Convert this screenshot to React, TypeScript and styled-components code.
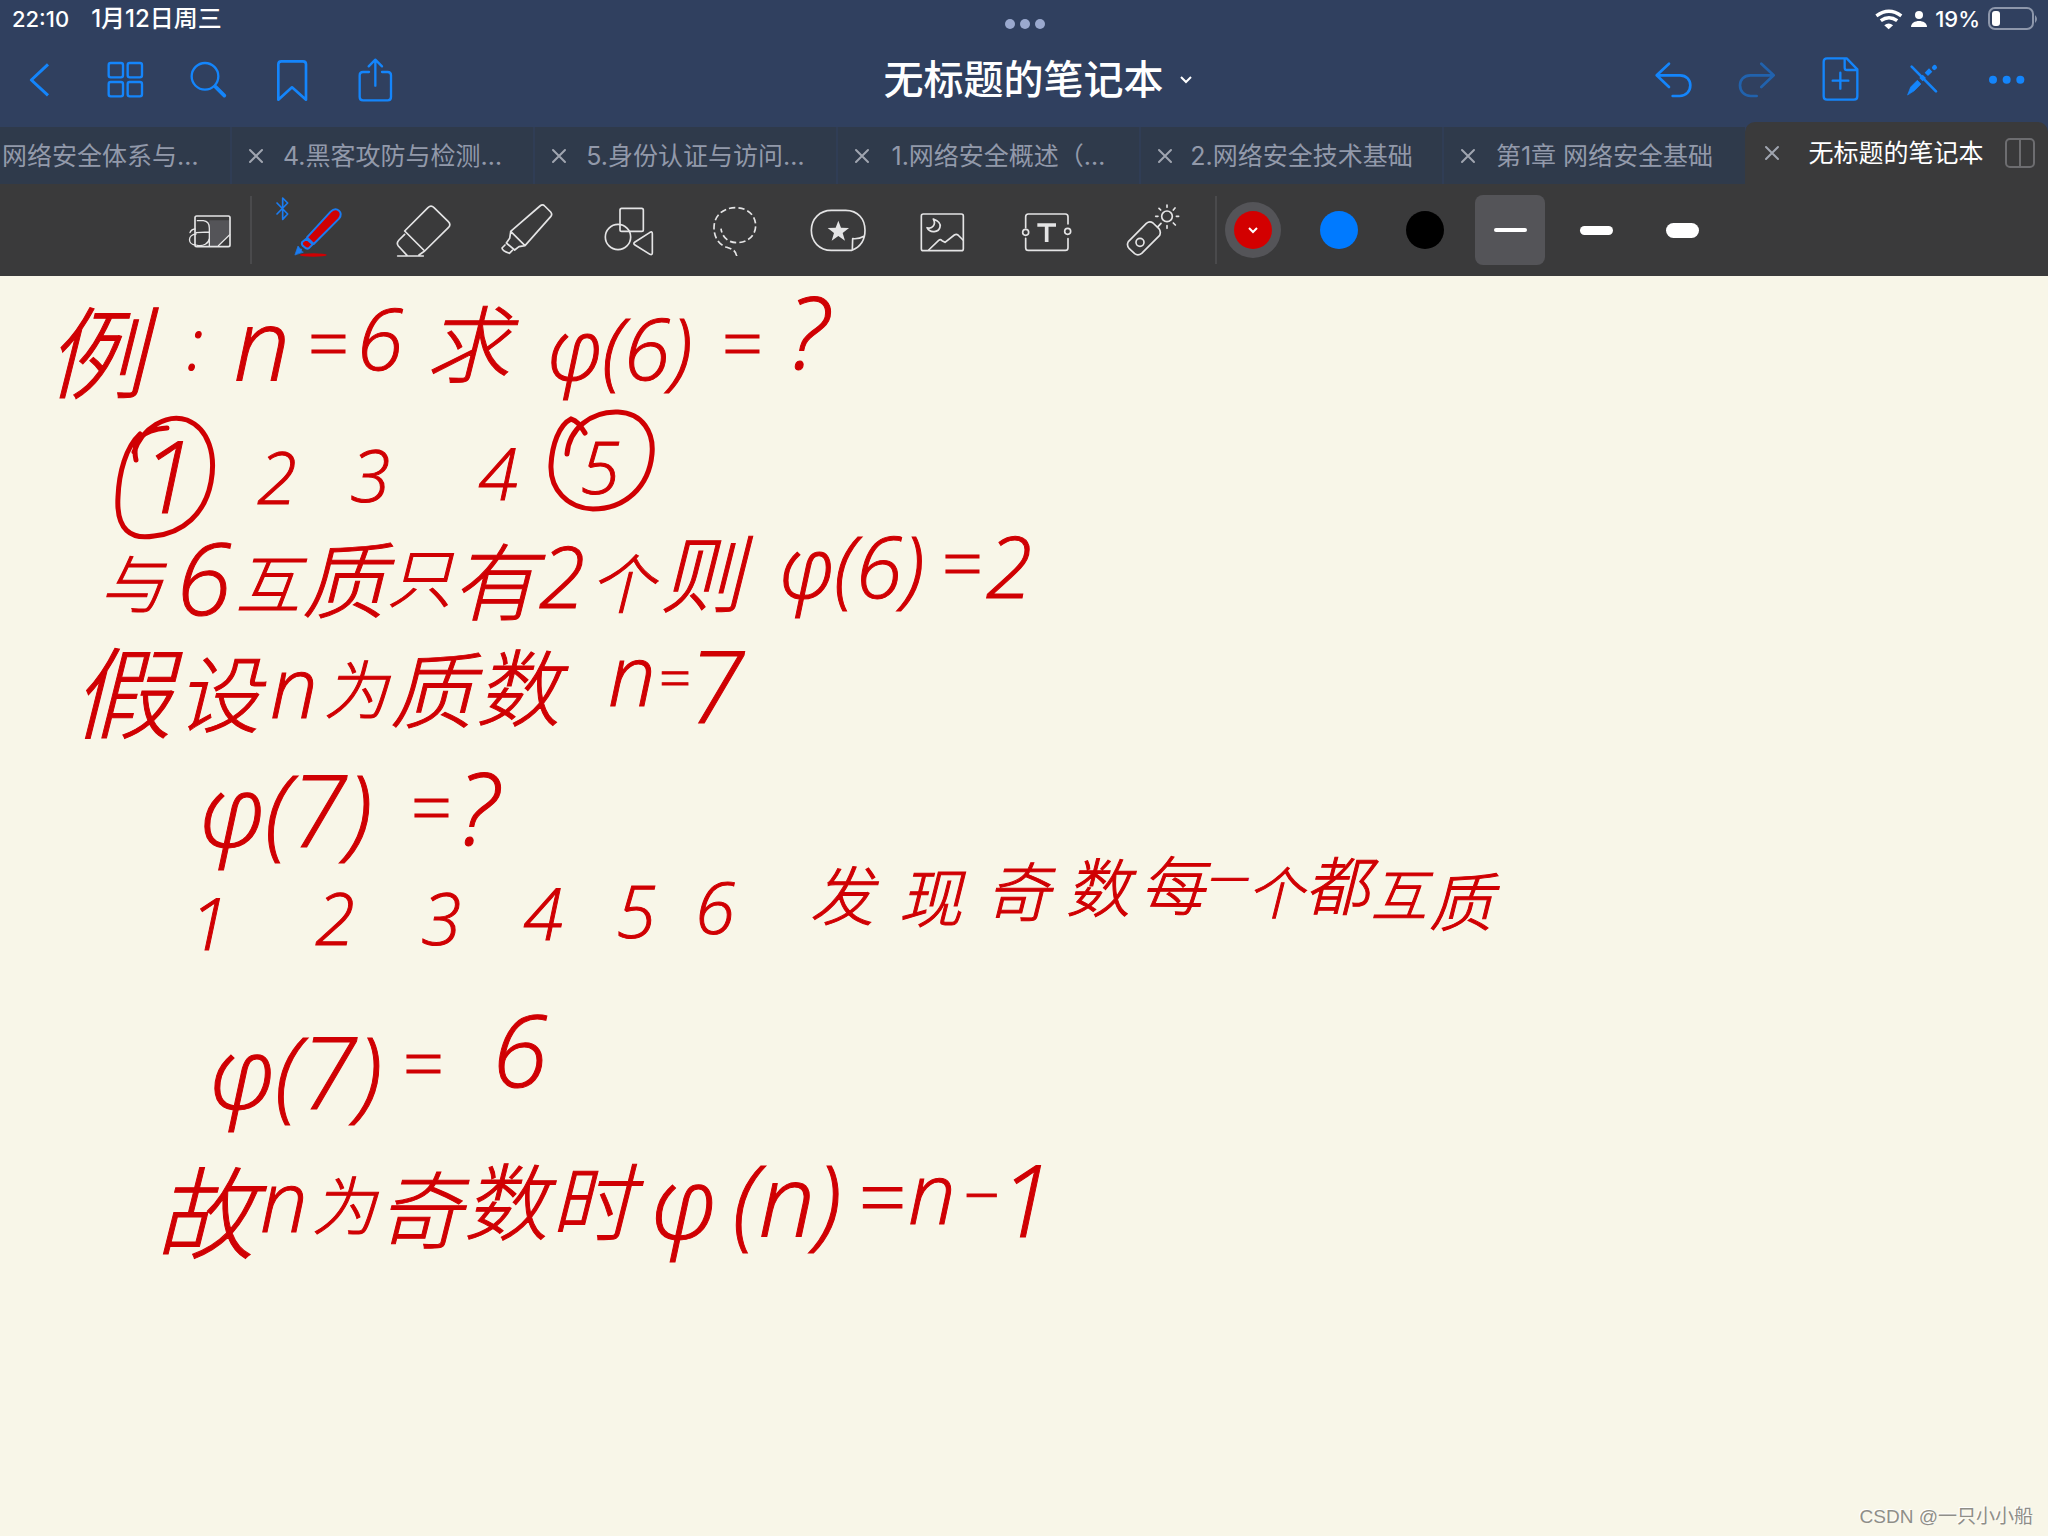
import React, { useState } from "react";
import styled, { createGlobalStyle, css } from "styled-components";

const ui = `Inter, "Noto Sans CJK SC", sans-serif`;
const blue = "#1485fb";

const Global = createGlobalStyle`
  * { box-sizing: border-box; }
  body { margin: 0; background: #f8f6e8; font-family: ${ui}; }
  button { border: 0; padding: 0; margin: 0; background: none; font: inherit; color: inherit; cursor: pointer; }
  svg { display: block; }
`;

const App = styled.div`
  display: flex;
  flex-direction: column;
  min-height: 100vh;
  overflow: hidden;
`;

/* ---------- header ---------- */

const Header = styled.header`
  background: #30405f;
`;

const StatusBar = styled.div`
  display: grid;
  grid-template-columns: 1fr auto 1fr;
  align-items: center;
  height: 38px;
  padding: 0 10px 0 12px;
  color: #fff;
  font-size: 22px;
  line-height: 26px;
  font-weight: 500;
`;

const Clock = styled.div`
  display: flex;
  align-items: baseline;
  gap: 22px;
`;

const DateText = styled.span`
  font-size: 24px;
`;

const MultitaskDots = styled.button`
  display: flex;
  gap: 5px;
  padding-top: 10px;
`;

const MultitaskDot = styled.span`
  width: 10px;
  height: 10px;
  border-radius: 50%;
  background: #9aa9ce;
`;

const Indicators = styled.div`
  display: flex;
  justify-content: flex-end;
  align-items: center;
  gap: 8px;
`;

const NavBar = styled.nav`
  display: grid;
  grid-template-columns: 1fr auto 1fr;
  align-items: center;
  height: 84px;
  padding: 0 13px 0 12px;
`;

const NavGroup = styled.div<{ $end?: boolean }>`
  display: flex;
  gap: ${(p) => (p.$end ? 27 : 28)}px;
  justify-content: ${(p) => (p.$end ? "flex-end" : "flex-start")};
`;

const NavButton = styled.button`
  width: 56px;
  height: 56px;
  color: ${blue};
  &:disabled { opacity: 0.5; }
`;

const Title = styled.h1`
  position: relative;
  margin: 0;
  color: #fff;
  font-size: 40px;
  line-height: 56px;
  font-weight: 500;
`;

const TitleMenu = styled.button`
  position: absolute;
  left: 100%;
  top: 0;
  width: 44px;
  height: 56px;
  display: grid;
  place-items: center;
`;

/* ---------- tabs ---------- */

const TabBar = styled.div`
  display: flex;
  justify-content: flex-end;
  align-items: flex-end;
  height: 62px;
`;

const Tab = styled.div<{ $active?: boolean; $first?: boolean }>`
  display: flex;
  align-items: center;
  flex: 0 0 303px;
  height: 57px;
  padding: 0 20px 0 12px;
  background: #2f3a4b;
  border-left: 2px solid #303d55;
  color: #9299aa;
  ${(p) => p.$first && css`
    flex: 1 1 0;
    padding-left: 2px;
    border-left: 0;
  `}
  ${(p) => p.$active && css`
    height: 62px;
    padding-left: 15px;
    padding-right: 12px;
    background: #3a3a3b;
    border-left: 0;
    border-radius: 10px 10px 0 0;
    color: #fff;
  `}
`;

const TabClose = styled.button`
  flex: none;
  width: 24px;
  height: 24px;
  color: #a0a5b0;
`;

const TabLabel = styled.button<{ $start?: boolean }>`
  flex: 1;
  min-width: 0;
  white-space: nowrap;
  font-size: 25px;
  line-height: 36px;
  text-align: ${(p) => (p.$start ? "left" : "center")};
  padding-left: ${(p) => (p.$start ? 0 : 4)}px;
`;

const SplitButton = styled.button`
  flex: none;
  width: 32px;
  height: 32px;
  color: #6d6d70;
`;

/* ---------- toolbar ---------- */

const Toolbar = styled.div`
  display: flex;
  align-items: center;
  height: 92px;
  padding-left: 174px;
  background: #3a3a3b;
  color: #e4e4e5;
`;

const Divider = styled.span`
  flex: none;
  width: 2px;
  height: 68px;
  margin-left: 4px;
  background: #4a4a4c;
`;

const ToolButton = styled.button`
  flex: none;
  width: 72px;
  height: 72px;
`;

const Tools = styled.div`
  display: flex;
  gap: 32px;
  margin: 0 24px 0 31px;
`;

const Colors = styled.div`
  display: flex;
  gap: 30px;
  margin: 0 22px 0 8px;
`;

const ColorButton = styled.button<{ $color: string; $on: boolean }>`
  display: grid;
  place-items: center;
  width: 56px;
  height: 56px;
  border-radius: 50%;
  background: ${(p) => (p.$on ? "#545458" : "transparent")};
  color: #fff;
  & > span {
    display: grid;
    place-items: center;
    width: 38px;
    height: 38px;
    border-radius: 50%;
    background: ${(p) => p.$color};
  }
`;

const Widths = styled.div`
  display: flex;
  gap: 16px;
`;

const WidthButton = styled.button<{ $h: number; $on: boolean }>`
  display: grid;
  place-items: center;
  width: 70px;
  height: 70px;
  border-radius: 8px;
  background: ${(p) => (p.$on ? "#545458" : "transparent")};
  & > span {
    width: 33px;
    height: ${(p) => p.$h}px;
    border-radius: 8px;
    background: #fff;
  }
`;

/* ---------- paper ---------- */

const Paper = styled.main`
  position: relative;
  flex: 1;
  display: flex;
  align-items: flex-end;
  justify-content: flex-end;
  padding: 4px 15px;
  background: #f8f6e8;
`;

const Line = styled.p`
  margin: 0;
`;

const Ink = styled.span<{ $x: number; $y: number; $size: number }>`
  position: absolute;
  left: ${(p) => p.$x}px;
  top: ${(p) => p.$y}px;
  transform: translate(-50%, -50%);
  font-family: "Open Sans", "Noto Sans CJK SC", sans-serif;
  font-size: ${(p) => p.$size}px;
  font-style: italic;
  font-weight: 300;
  line-height: 1;
  white-space: nowrap;
  color: #d00003;
  -webkit-text-stroke: 1px #d00003;
`;

const Rings = styled.svg`
  position: absolute;
  left: 100px;
  top: 120px;
  color: #d00003;
`;

const Watermark = styled.footer`
  font-family: "Liberation Sans", "Noto Sans CJK SC", sans-serif;
  font-size: 19px;
  line-height: 30px;
  color: #8f8e88;
  text-shadow: -1px -1px 0 #fff;
`;

/* ---------- icons ---------- */

const Icon = ({ box, w = 5, children }: { box: string; w?: number; children: React.ReactNode }) => (
  <svg width="100%" height="100%" viewBox={box} overflow="visible" fill="none" stroke="currentColor" strokeWidth={w}
    strokeLinecap="round" strokeLinejoin="round" aria-hidden="true">{children}</svg>
);

const leftNav = [
  { name: "返回", box: "36 156 168 168", art: <path strokeWidth="9" strokeLinecap="butt" d="M144 193 94 240l50 46" /> },
  { name: "缩略图", box: "288 156 168 168", art: <g strokeWidth="7">
      <rect x="326" y="189" width="43" height="43" rx="6" /><rect x="383" y="189" width="43" height="43" rx="6" />
      <rect x="326" y="246" width="43" height="43" rx="6" /><rect x="383" y="246" width="43" height="43" rx="6" /></g> },
  { name: "搜索", box: "540 156 168 168", art: <><circle cx="615" cy="229" r="40" strokeWidth="7" /><path strokeWidth="11" d="m646 260 27 27" /></> },
  { name: "书签", box: "792 156 168 168", art: <path strokeWidth="8" d="M835 299V193q0-9 9-9h65q9 0 9 9v106l-42-37z" /> },
  { name: "分享", box: "1044 156 168 168", art: <path strokeWidth="7" d="M1107 216h-18q-10 0-10 10v65q0 10 10 10h74q10 0 10-10v-65q0-10-10-10h-17M1126 257v-77M1106 199l20-20 20 20" /> },
];

const rightNav = [
  { name: "撤销", box: "81 156 168 168", art: <path strokeWidth="8" d="M147 191 110 226l37 35M112 226h68c20 0 31 14 31 30 0 18-13 32-32 32h-21" /> },
  { name: "重做", off: true, box: "330 156 168 168", art: <path strokeWidth="8" d="m424 191 37 35-37 35M459 226h-68c-20 0-31 14-31 30 0 18 13 32 32 32h18" /> },
  { name: "添加页面", box: "579 156 168 168", art: <path strokeWidth="7" d="M680 175h-59q-10 0-10 10v104q0 10 10 10h81q10 0 10-10v-81zM674 178v25q0 7 7 7h29M661 218v48M638 242h47" /> },
  { name: "只读模式", box: "828 156 168 168", art: <><path strokeWidth="8" d="m875 200 73 74" />
      <path fill="currentColor" strokeWidth="2" d="m863 284 9-23 20-20 11 11-20 20z" />
      <path strokeWidth="14" strokeLinecap="butt" d="m919 223 13-13M903 239l10-10" /><path strokeWidth="14" d="m943 203 1-1" /></> },
  { name: "更多", box: "1077 156 168 168", art: <g fill="currentColor" stroke="none"><circle cx="1119" cy="239" r="12" /><circle cx="1160" cy="239" r="12" /><circle cx="1201" cy="239" r="12" /></g> },
];

const tools = [
  { name: "钢笔", box: "309 27 216 216", art: <>
      <ellipse cx="400" cy="210" rx="40" ry="5" fill="#d00003" stroke="none" />
      <g stroke="#1b7cf0" strokeWidth="6">
        <path fill="#d00003" d="m381 157 71-77c8-8 18-9 25-3 7 7 7 15 0 24l-76 76z" />
        <path fill="#d00003" d="m379 161 19 17-12 12q-6 3-13-4-10-7-7-14z" />
        <path fill="#1b7cf0" strokeWidth="2" d="m345 209 9-26 7 9h4l-1 7 5 2z" />
        <path strokeWidth="5" d="m291 54 32 33-15 16V39l15 15-32 33" /></g></> },
  { name: "橡皮擦", box: "621 27 216 216", art: <path d="m674 138 70-70q9-9 18 0l43 42q9 9 0 18l-71 70zM674 148l-17 17q-9 9-2 18l26 28M734 198l-17 12M653 213h77" /> },
  { name: "荧光笔", box: "933 27 216 216", art: <path d="m992 139 88-76q8-7 14 0l18 18q6 7 0 14l-77 87zM992 141l-3 19-10 14M1035 182l-18 3-13 10M979 174l25 21M975 180l-9 9q0 8 22 16l9-9" /> },
  { name: "形状", box: "-15 27 216 216", art: <><rect x="60" y="70" width="70" height="69" rx="5" /><circle cx="54" cy="156" r="38" /><path d="M105 171q-7 5 0 9l45 28q7 3 7-5v-57q0-8-7-4z" /></> },
  { name: "套索", box: "297 27 216 216", art: <path strokeDasharray="19 9" strokeLinecap="butt" d="M410 213c-2-18-17-22-32-27-25-9-36-33-36-58 0-36 28-60 64-60 37 0 61 23 61 54 0 29-24 51-56 51-30 0-45-20-48-42" /> },
  { name: "贴纸", box: "609 27 216 216", art: <><path d="M756 196h-62c-36 0-60-26-60-60s25-60 60-60h43c38 0 58 27 58 60 0 30-14 50-39 60zM757 194l1-33q18 2 34-7" />
      <path fill="currentColor" stroke="none" d="m715 107 8 21 24 1-19 15 7 23-20-14-20 14 7-23-19-15 24-1z" /></> },
  { name: "图片", box: "921 27 216 216", art: <><rect x="964" y="87" width="126" height="110" rx="6" /><path d="M1000 102c16 6 22 16 20 24-3 16-30 20-39 2 16 6 28-10 19-26zM986 195l30-29q5-4 10 1l9 5 28-22q6-4 11 0l15 15" /></> },
  { name: "文本", box: "-87 27 216 216", art: <><path d="M-43 128V95q0-8 8-8H76q8 0 8 8v22M84 161v27q0 8-8 8H-35q-8 0-8-8v-28" /><circle cx="-43" cy="142" r="9" /><circle cx="83" cy="139" r="9" />
      <path strokeWidth="11" strokeLinecap="butt" d="M-8 120h56M20 118v53" /></> },
  { name: "激光笔", box: "225 27 216 216", art: <><circle cx="381" cy="94" r="16" /><circle cx="300" cy="172" r="12" />
      <path d="m265 170 54-55q10-8 20-1l17 16q8 10 3 21l-54 54q-11 9-21 1l-17-16q-8-10-2-20zM352 127l11-12M381 60v7M381 122v8M347 94h7M409 94h7M357 70l5 5M405 69l-5 6M400 114l6 6" /></> },
];

const tabs = ["4.黑客攻防与检测…", "5.身份认证与访问…", "1.网络安全概述（…", "2.网络安全技术基础", "第1章 网络安全基础"];
const inks = [
  { name: "红色", value: "#d30000" },
  { name: "蓝色", value: "#007aff" },
  { name: "黑色", value: "#000" },
];
const strokes = [4, 9, 15];

const XS = 40, S = 56, M = 64, N = 72, L = 84, XL = 100;
type Word = [string, number, number, number];
const notes: Word[][] = [
  [["例", 96, 76, XL], [":", 195, 66, N], ["n", 262, 66, XL], ["=", 327, 66, N], ["6", 380, 62, L], ["求", 468, 68, L], ["φ(6)", 620, 72, L], ["=", 741, 66, N], ["?", 808, 54, XL]],
  [["1", 168, 198, XL], ["2", 277, 200, N], ["3", 370, 198, N], ["4", 498, 196, N], ["5", 600, 190, N]],
  [["与", 132, 308, M], ["6", 204, 300, XL], ["互", 268, 308, M], ["质", 344, 304, L], ["只", 420, 302, M], ["有", 494, 306, L], ["2", 562, 300, L], ["个", 622, 308, M], ["则", 702, 298, L], ["φ(6)", 852, 290, L], ["=", 961, 286, N], ["2", 1009, 290, L]],
  [["假", 122, 416, XL], ["设", 218, 418, L], ["n", 294, 410, L], ["为", 356, 414, M], ["质", 432, 414, L], ["数", 518, 412, L], ["n", 632, 398, L], ["=", 674, 400, S], ["7", 716, 408, XL]],
  [["φ(7)", 286, 532, XL], ["=", 430, 530, N], ["?", 478, 530, XL]],
  [["1", 209, 646, N], ["2", 335, 641, N], ["3", 441, 641, N], ["4", 543, 636, N], ["5", 636, 634, N], ["6", 715, 630, N], ["发", 842, 620, M], ["现", 930, 622, M], ["奇", 1018, 616, M], ["数", 1098, 612, M], ["每", 1172, 610, M], ["一", 1226, 604, XS], ["个", 1275, 616, S], ["都", 1337, 610, M], ["互", 1399, 618, S], ["质", 1461, 626, M]],
  [["φ(7)", 296, 794, XL], ["=", 422, 786, N], ["6", 520, 772, XL]],
  [["故", 205, 936, XL], ["n", 284, 924, L], ["为", 344, 930, M], ["奇", 420, 934, L], ["数", 506, 926, L], ["时", 592, 926, L], ["φ", 684, 924, XL], ["(n)", 787, 922, XL], ["=", 881, 920, L], ["n", 932, 916, L], ["−", 981, 918, M], ["1", 1026, 922, XL]],
];

export default function Notebook() {
  const [color, setColor] = useState("#d30000");
  const [width, setWidth] = useState(4);
  const close = <Icon box="0 0 24 24" w={2}><path d="m6 6 12 12M18 6 6 18" /></Icon>;

  return (
    <App>
      <Global />
      <Header>
        <StatusBar>
          <Clock><span>22:10</span><DateText>1月12日周三</DateText></Clock>
          <MultitaskDots aria-label="多任务"><MultitaskDot /><MultitaskDot /><MultitaskDot /></MultitaskDots>
          <Indicators>
            <svg width="28" height="22" viewBox="766 24 82 64" fill="none" stroke="#fff" strokeWidth="10" aria-hidden="true">
              <path d="M770 47q37-27 73 0M783 61q24-18 48 0" /><path fill="#fff" stroke="none" d="M793 74q13-10 26 0l-13 12z" />
            </svg>
            <svg width="16" height="18" viewBox="0 0 16 18" fill="#fff" aria-hidden="true"><circle cx="8" cy="5" r="4" /><path d="M0 17c0-8 16-8 16 0z" /></svg>
            <span>19%</span>
            <svg width="50" height="24" viewBox="0 0 50 24" fill="none" aria-hidden="true">
              <rect x="1" y="1" width="44" height="21" rx="6" stroke="#8d97ab" strokeWidth="2" /><rect x="4" y="4" width="8" height="15" rx="3" fill="#fff" /><path d="M47 8q4 4 0 8z" fill="#8d97ab" />
            </svg>
          </Indicators>
        </StatusBar>
        <NavBar>
          <NavGroup>{leftNav.map((n) => <NavButton key={n.name} aria-label={n.name}><Icon box={n.box}>{n.art}</Icon></NavButton>)}</NavGroup>
          <Title>无标题的笔记本
            <TitleMenu aria-label="笔记本菜单">
              <svg width="14" height="10" viewBox="0 0 14 10" fill="none" stroke="#fff" strokeWidth="2" aria-hidden="true"><path d="m2 2 5 5 5-5" /></svg>
            </TitleMenu>
          </Title>
          <NavGroup $end>{rightNav.map((n) => <NavButton key={n.name} aria-label={n.name} disabled={n.off}><Icon box={n.box}>{n.art}</Icon></NavButton>)}</NavGroup>
        </NavBar>
        <TabBar>
          <Tab $first><TabLabel $start>网络安全体系与…</TabLabel></Tab>
          {tabs.map((t) => (
            <Tab key={t}><TabClose aria-label="关闭">{close}</TabClose><TabLabel>{t}</TabLabel></Tab>
          ))}
          <Tab $active>
            <TabClose aria-label="关闭">{close}</TabClose>
            <TabLabel>无标题的笔记本</TabLabel>
            <SplitButton aria-label="分屏"><Icon box="0 0 32 32" w={2}><rect x="2" y="2" width="28" height="28" rx="4" /><path d="M16 2v28" /></Icon></SplitButton>
          </Tab>
        </TabBar>
      </Header>
      <Toolbar role="toolbar">
        <ToolButton aria-label="缩放窗口">
          <Icon box="-18 27 216 216">
            <path fill="#545458" stroke="none" d="M88 106h60v40l-38 38H88z" />
            <rect x="45" y="93" width="105" height="92" rx="5" /><path strokeWidth="4" d="M52 107h18q18 2 18 22v54M88 141l-40 2M48 147c-26 2-26 32 0 33M52 181c18 3 34-5 36-21M30 143q3-10 15-11M115 182l34-33" />
          </Icon>
        </ToolButton>
        <Divider />
        <Tools>{tools.map((t) => <ToolButton key={t.name} aria-label={t.name}><Icon box={t.box}>{t.art}</Icon></ToolButton>)}</Tools>
        <Divider />
        <Colors>
          {inks.map((c) => (
            <ColorButton key={c.name} aria-label={c.name} aria-pressed={color === c.value} $color={c.value} $on={color === c.value} onClick={() => setColor(c.value)}>
              <span>{color === c.value && <svg width="12" height="10" viewBox="0 0 12 10" fill="none" stroke="#fff" strokeWidth="2" aria-hidden="true"><path d="m2 3 4 4 4-4" /></svg>}</span>
            </ColorButton>
          ))}
        </Colors>
        <Widths>
          {strokes.map((h) => (
            <WidthButton key={h} aria-label={`笔画粗细 ${h}`} aria-pressed={width === h} $h={h} $on={width === h} onClick={() => setWidth(h)}><span /></WidthButton>
          ))}
        </Widths>
      </Toolbar>
      <Paper>
        {notes.map((line, i) => (
          <Line key={i}>{line.map(([text, x, y, size], j) => <Ink key={j} $x={x} $y={y} $size={size}>{text}</Ink>)}</Line>
        ))}
        <Rings width="570" height="150" viewBox="100 120 570 150" fill="none" stroke="currentColor" strokeWidth="5" strokeLinecap="round" aria-hidden="true">
          <path d="M136 184c-4-18 4-30 31-32M134 176c8-24 33-39 53-32 22 9 29 35 24 62-6 32-28 51-57 54-23 4-38-6-36-39 1-25 8-50 22-63" />
          <path d="M567 178c2-25 24-43 51-42 25 1 36 21 34 42-3 33-27 55-59 55-26-1-43-20-42-44 1-20 8-40 20-46 7 2 10 8 14 14" />
        </Rings>
        <Watermark>CSDN @一只小小船</Watermark>
      </Paper>
    </App>
  );
}
